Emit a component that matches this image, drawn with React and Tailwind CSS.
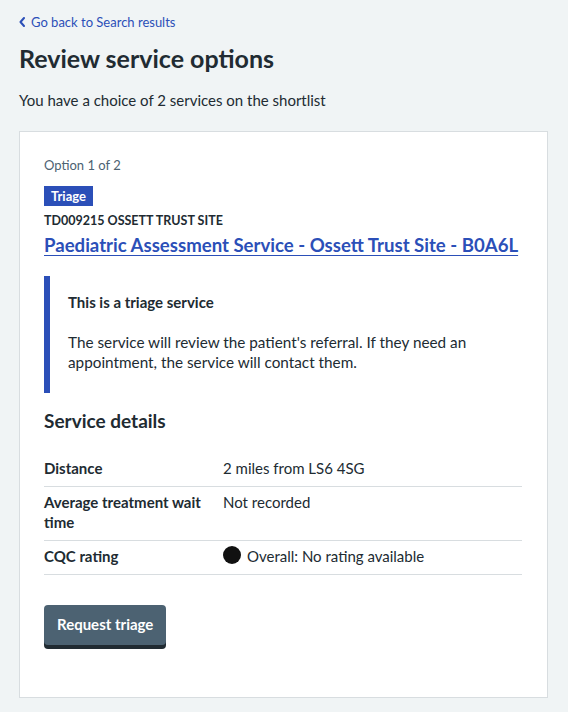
const details = [
    { label: 'Distance', value: '2 miles from LS6 4SG' },
    { label: 'Average treatment wait time', value: 'Not recorded' },
    { label: 'CQC rating', value: 'Overall: No rating available', dot: true },
];

const App = () => {
    return (
        <div className="min-h-screen bg-[#f0f4f5] text-[#212b32] font-['Lato',sans-serif] pl-[19px] pr-[20px] pt-[12px]">
            {/* Back link */}
            <a href="#" className="flex items-center gap-[6px] text-[13px] leading-[20px] text-[#2b4fb8]">
                <svg width="6" height="10" viewBox="0 0 6 10" fill="none" className="shrink-0">
                    <path d="M5 1L1.5 5L5 9" stroke="currentColor" strokeWidth="2" strokeLinecap="round" strokeLinejoin="round" />
                </svg>
                <span>Go back to Search results</span>
            </a>

            <h1 className="mt-[9px] text-[25px] leading-[34px] font-bold">Review service options</h1>
            <p className="mt-[13px] text-[15px] leading-[24px]">You have a choice of 2 services on the shortlist</p>

            {/* Option card */}
            <div className="mt-[19px] bg-white border border-[#d8dde0] px-[24px] pt-[23px] pb-[52px]">
                <p className="text-[13px] leading-[20px] text-[#4c6272]">Option 1 of 2</p>
                <span className="inline-block mt-[11px] bg-[#2b4fb8] text-white text-[13px] leading-[20px] font-bold px-[7px]">
                    Triage
                </span>
                <p className="mt-[6px] text-[12.5px] leading-[16px] font-bold uppercase">TD009215 Ossett Trust Site</p>
                <a href="#" className="block mt-[2px] text-[18.6px] leading-[28px] font-bold text-[#2b4fb8] underline underline-offset-[3px] whitespace-nowrap">
                    Paediatric Assessment Service - Ossett Trust Site - B0A6L
                </a>

                {/* Inset */}
                <div className="mt-[17px] border-l-[6px] border-[#2b4fb8] pl-[18px] pr-[24px] pt-[14px] pb-[21px]">
                    <p className="text-[15px] leading-[24px] font-bold">This is a triage service</p>
                    <p className="mt-[18px] text-[15.3px] leading-[20px]">
                        The service will review the patient's referral. If they need an appointment, the service will contact them.
                    </p>
                </div>

                <h2 className="mt-[14px] text-[19px] leading-[28px] font-bold">Service details</h2>

                <div className="mt-[18px] w-[478px]">
                    {details.map((row) => (
                        <div key={row.label} className="flex border-b border-[#d8dde0] pt-[5px] pb-[8px] text-[15px] leading-[20px]">
                            <div className="w-[179px] font-bold pr-[8px]">{row.label}</div>
                            <div className="flex-1 flex items-start gap-[6px]">
                                {row.dot && <span className="w-[18px] h-[18px] rounded-full bg-[#111] shrink-0" />}
                                <span>{row.value}</span>
                            </div>
                        </div>
                    ))}
                </div>

                <button className="mt-[30px] bg-[#4c6272] text-white font-bold text-[15px] leading-[20px] px-[13px] pt-[9px] pb-[11px] rounded-[4px] shadow-[0_4px_0_#212b32]">
                    Request triage
                </button>
            </div>
        </div>
    );
};

export default App;
